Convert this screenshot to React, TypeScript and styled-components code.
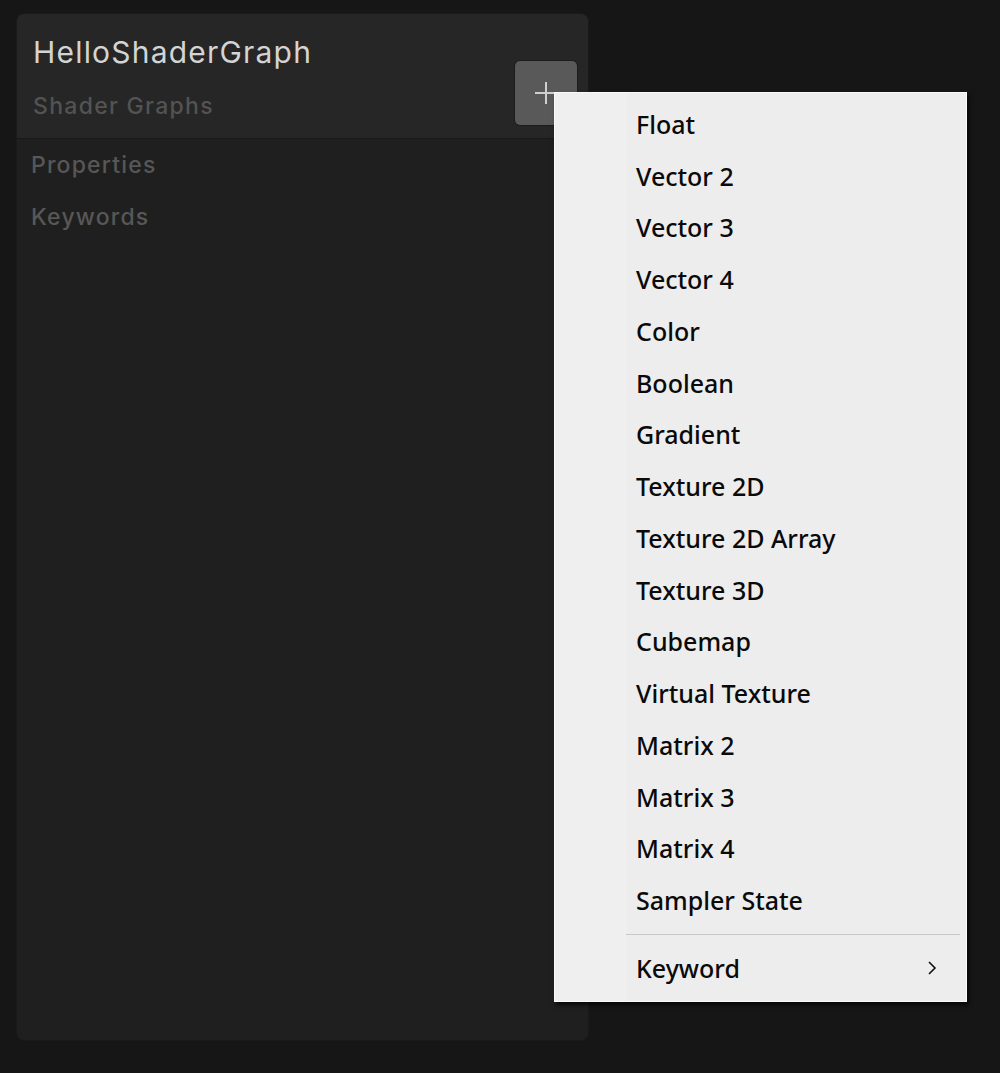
import React from 'react'
import styled, { createGlobalStyle } from 'styled-components';

const GlobalStyle = createGlobalStyle`
    html, body {
        margin: 0;
        padding: 0;
        background: #161616;
    }
`;

const propertyTypes = [
    'Float',
    'Vector 2',
    'Vector 3',
    'Vector 4',
    'Color',
    'Boolean',
    'Gradient',
    'Texture 2D',
    'Texture 2D Array',
    'Texture 3D',
    'Cubemap',
    'Virtual Texture',
    'Matrix 2',
    'Matrix 3',
    'Matrix 4',
    'Sampler State',
];

class App extends React.Component {
    render() {
        return (
            <Page>
                <GlobalStyle />
                <Blackboard>
                    <Header>
                        <Title>HelloShaderGraph</Title>
                        <SubTitle>Shader Graphs</SubTitle>
                        <AddButton aria-label="Add">
                            <svg width="24" height="24" viewBox="0 0 24 24">
                                <path d="M12 1v22M1 12h22" stroke="#cfcfcf" strokeWidth="2" />
                            </svg>
                        </AddButton>
                    </Header>
                    <Section>Properties</Section>
                    <Section>Keywords</Section>
                </Blackboard>

                <Menu>
                    {propertyTypes.map(name => (
                        <MenuItem key={name}>{name}</MenuItem>
                    ))}
                    <Separator />
                    <MenuItem>
                        Keyword
                        <Chevron width="12" height="16" viewBox="0 0 12 16">
                            <path d="M3 2l6 6-6 6" fill="none" stroke="#111" strokeWidth="1.6" />
                        </Chevron>
                    </MenuItem>
                </Menu>
            </Page>
        )
    }
}

const Page = styled.div`
    position: relative;
    width: 1000px;
    height: 1073px;
    padding: 14px 0 0 17px;
    box-sizing: border-box;
    overflow: hidden;
    font-family: Inter, "Liberation Sans", sans-serif;
`;

const Blackboard = styled.div`
    width: 571px;
    height: 1026px;
    background: #1f1f1f;
    border-radius: 7px;
    box-shadow: 0 0 0 1px #1a1a1a;
    overflow: hidden;
    display: flex;
    flex-direction: column;
`;

const Header = styled.div`
    position: relative;
    height: 125px;
    box-sizing: border-box;
    padding: 20px 0 0 16px;
    background: #262626;
    border-bottom: 1px solid #181818;
`;

const Title = styled.div`
    color: #d4d4d4;
    font-size: 30px;
    line-height: 36px;
    letter-spacing: 1.2px;
`;

const SubTitle = styled.div`
    margin-top: 22px;
    color: #535353;
    font-size: 23px;
    font-weight: 500;
    line-height: 28px;
    letter-spacing: 1.3px;
`;

// sits on the header's right edge, under the open menu
const AddButton = styled.div`
    position: absolute;
    top: 47px;
    right: 11px;
    width: 62px;
    height: 64px;
    border-radius: 5px;
    background: #595959;
    box-shadow: 0 0 0 1px #1c1c1c;
    display: flex;
    align-items: center;
    justify-content: center;
`;

const Section = styled.div`
    padding-left: 14px;
    height: 52px;
    line-height: 52px;
    color: #575757;
    font-size: 23px;
    font-weight: 500;
    letter-spacing: 1.2px;
`;

const Menu = styled.div`
    position: absolute;
    top: 92px;
    left: 554px;
    width: 413px;
    padding: 5px 0 7px;
    box-sizing: border-box;
    background: linear-gradient(to right, #efefef 0, #efefef 72px, #ededed 72px);
    border: 1px solid #fafafa;
    box-shadow: 2px 3px 4px rgba(0, 0, 0, 0.7);
    font-family: "Noto Sans", "Open Sans", sans-serif;
`;

const MenuItem = styled.div`
    display: flex;
    align-items: center;
    justify-content: space-between;
    height: 51.75px;
    padding: 0 28px 0 81px;
    color: #0a0a0a;
    font-size: 25px;
    font-weight: 500;
`;

const Separator = styled.div`
    height: 1px;
    margin: 8px 6px 7px 71px;
    background: #c8c8c8;
`;

const Chevron = styled.svg`
    display: block;
`;

export default App;
